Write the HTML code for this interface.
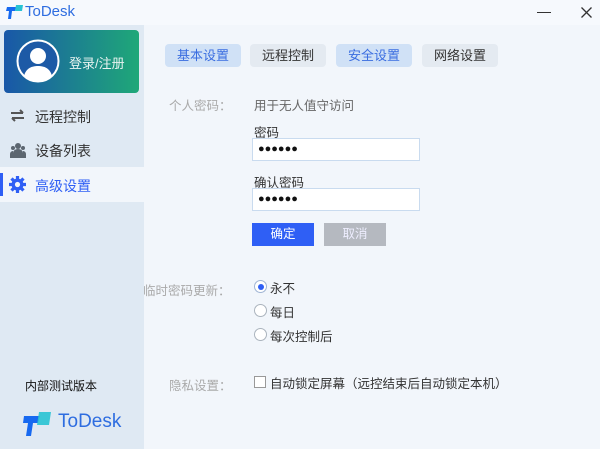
<!DOCTYPE html>
<html><head><meta charset="utf-8"><style>
*{margin:0;padding:0;box-sizing:border-box}
body{width:600px;height:449px;overflow:hidden;background:#f2f6fb;font-family:"Liberation Sans","Noto Sans CJK SC",sans-serif;font-size:13px;color:#333;position:relative}
.a{position:absolute}
.tab{position:absolute;top:44px;height:23px;width:76px;border-radius:4px;background:#e4eaf1;text-align:center;line-height:23px;font-size:13px;color:#333}
.tab.on{background:#d0e1f6;color:#3a6de0}
.inp{position:absolute;left:252px;width:168px;height:23px;background:#fff;border:1px solid #c9dbef;font-size:11px;letter-spacing:0px;line-height:21px;padding-left:5px;color:#111}
.rad{position:absolute;left:254px;width:13px;height:13px;border:1px solid #aab3bd;border-radius:50%;background:#fff}
.lbl{position:absolute;color:#aaa;font-size:12.5px}
</style></head><body>
<div class="a" style="left:0;top:0;width:600px;height:25px;background:#f6f9fd"></div>
<svg class="a" style="left:6px;top:4px" width="18" height="15" viewBox="0 0 18 15"><path d="M1 3h9l-1 4H6l-1 8H2l1-8H0z" fill="#1769f0"/><path d="M10 1h7l-1 6h-7z" fill="#28c3d3"/></svg>
<div class="a" style="left:25px;top:3px;font-size:15px;color:#2e6de0">ToDesk</div>
<div class="a" style="left:537px;top:12px;width:14px;height:1px;background:#333"></div>
<svg class="a" style="left:581px;top:7px" width="11" height="11" viewBox="0 0 11 11"><path d="M0.5 0.5l10 10M10.5 0.5l-10 10" stroke="#333" stroke-width="1.3"/></svg>
<div class="a" style="left:0;top:25px;width:144px;height:424px;background:#dfe9f3"></div>
<div class="a" style="left:0;top:167px;width:144px;height:35px;background:#f2f6fb"></div>
<div class="a" style="left:0;top:202px;width:144px;height:20px;background:#dfe9f3;border-radius:0 12px 0 0"></div>
<div class="a" style="left:0;top:147px;width:144px;height:20px;background:#dfe9f3;border-radius:0 0 12px 0"></div>
<div class="a" style="left:0;top:173px;width:3px;height:23px;background:#2f5ff5"></div>
<div class="a" style="left:4px;top:30px;width:135px;height:63px;border-radius:4px;background:linear-gradient(90deg,#1957a8,#1fa878)"></div>
<svg class="a" style="left:16px;top:39px" width="44" height="44" viewBox="0 0 44 44"><circle cx="22" cy="22" r="20.5" fill="#1d5aa6" stroke="#fff" stroke-width="2"/><circle cx="22" cy="17" r="8" fill="#fff"/><path d="M8 37c2-8 8-10 14-10s12 2 14 10a20 20 0 0 1-28 0z" fill="#fff"/></svg>
<div class="a" style="left:69px;top:53px;color:#e8f3f0;font-size:13px">登录/注册</div>
<svg class="a" style="left:10px;top:109px" width="15" height="13" viewBox="0 0 15 13"><path d="M1 4h12M10 1l3 3M14 9H2M5 12l-3-3" stroke="#555" stroke-width="2" fill="none"/></svg>
<div class="a" style="left:35px;top:107px;font-size:14px">远程控制</div>
<svg class="a" style="left:10px;top:142px" width="16" height="16" viewBox="0 0 16 16" fill="#5c6670"><circle cx="8" cy="4" r="3"/><circle cx="3" cy="6" r="2"/><circle cx="13" cy="6" r="2"/><path d="M3 16v-5a5 4 0 0 1 10 0v5zM0 16v-4a3 3 0 0 1 3-3v7zM16 16v-4a3 3 0 0 0-3-3v7z"/></svg>
<div class="a" style="left:35px;top:141px;font-size:14px">设备列表</div>
<svg class="a" style="left:9px;top:176px" width="17" height="17" viewBox="0 0 17 17"><g fill="#2f5ff5"><circle cx="8.5" cy="8.5" r="6"/><g stroke="#2f5ff5" stroke-width="3.2"><path d="M8.5 0v17M0 8.5h17M2.5 2.5l12 12M14.5 2.5l-12 12"/></g></g><circle cx="8.5" cy="8.5" r="2.6" fill="#f2f6fb"/></svg>
<div class="a" style="left:35px;top:176px;font-size:14px;color:#2f5ff5">高级设置</div>
<div class="a" style="left:25px;top:377px;font-size:12px;color:#111">内部测试版本</div>
<svg class="a" style="left:23px;top:411px" width="30" height="26" viewBox="0 0 30 26"><path d="M1 5h16l-2 7h-5l-2 13H3l2-13H0z" fill="#1769f0"/><path d="M16 1h12l-2 13h-12z" fill="#28c3d3" opacity=".9"/></svg>
<div class="a" style="left:58px;top:411px;font-size:19px;color:#2e6de0">ToDesk</div>
<div class="tab on" style="left:165px">基本设置</div>
<div class="tab" style="left:250px">远程控制</div>
<div class="tab on" style="left:336px">安全设置</div>
<div class="tab" style="left:422px">网络设置</div>
<div class="lbl" style="left:169px;top:95px">个人密码：</div>
<div class="a" style="left:254px;top:95px;color:#666;font-size:12.5px">用于无人值守访问</div>
<div class="a" style="left:254px;top:122px;font-size:12.5px">密码</div>
<div class="inp" style="top:138px">●●●●●●</div>
<div class="a" style="left:254px;top:172px;font-size:12.5px">确认密码</div>
<div class="inp" style="top:188px">●●●●●●</div>
<div class="a" style="left:252px;top:223px;width:62px;height:23px;background:#2f5ff5;color:#fff;text-align:center;line-height:23px;font-size:12.5px">确定</div>
<div class="a" style="left:324px;top:223px;width:62px;height:23px;background:#b5b9c0;color:#eef;text-align:center;line-height:23px;font-size:12.5px">取消</div>
<div class="lbl" style="left:143px;top:280px">临时密码更新：</div>
<div class="rad" style="top:280px;border-color:#9fb4d4"><div style="margin:2.5px;width:6px;height:6px;border-radius:50%;background:#2f5ff5"></div></div>
<div class="a" style="left:270px;top:278px;font-size:12.5px">永不</div>
<div class="rad" style="top:304px"></div>
<div class="a" style="left:270px;top:302px;font-size:12.5px">每日</div>
<div class="rad" style="top:328px"></div>
<div class="a" style="left:270px;top:326px;font-size:12.5px">每次控制后</div>
<div class="lbl" style="left:169px;top:375px">隐私设置：</div>
<div class="a" style="left:254px;top:376px;width:12px;height:12px;border:1px solid #999;background:#fff"></div>
<div class="a" style="left:270px;top:373px;font-size:12.5px">自动锁定屏幕（远控结束后自动锁定本机）</div>
</body></html>
